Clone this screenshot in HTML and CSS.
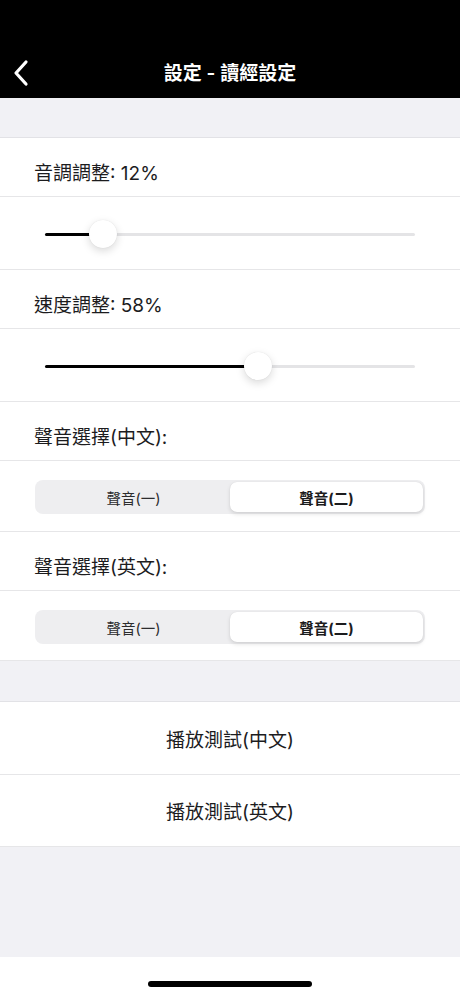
FILE: index.html
```html
<!DOCTYPE html>
<html lang="zh-Hant">
<head>
<meta charset="utf-8">
<title>設定 - 讀經設定</title>
<link rel="stylesheet" href="styles.css">
</head>
<body>
<div class="screen">
  <header class="navbar">
    <div class="nav-row">
      <svg class="back" width="20" height="28" viewBox="0 0 20 28" aria-hidden="true">
        <path d="M14 3 L4 14 L14 25" fill="none" stroke="#fff" stroke-width="3.2" stroke-linecap="round" stroke-linejoin="round"/>
      </svg>
      <div class="title">設定 - 讀經設定</div>
    </div>
  </header>

  <div class="spacer top-spacer"></div>

  <section class="group">
    <div class="row label-row">音調調整: 12%</div>
    <div class="row slider-row">
      <div class="slider">
        <div class="track"></div>
        <div class="fill" style="width: 58px"></div>
        <div class="thumb" style="left: 44px"></div>
      </div>
    </div>
    <div class="row label-row">速度調整: 58%</div>
    <div class="row slider-row">
      <div class="slider">
        <div class="track"></div>
        <div class="fill" style="width: 213px"></div>
        <div class="thumb" style="left: 199px"></div>
      </div>
    </div>
    <div class="row label-row">聲音選擇(中文):</div>
    <div class="row seg-row">
      <div class="segmented">
        <div class="segment">聲音(一)</div>
        <div class="segment selected">聲音(二)</div>
      </div>
    </div>
    <div class="row label-row">聲音選擇(英文):</div>
    <div class="row seg-row last">
      <div class="segmented">
        <div class="segment">聲音(一)</div>
        <div class="segment selected">聲音(二)</div>
      </div>
    </div>
  </section>

  <div class="spacer mid-spacer"></div>

  <section class="group">
    <div class="row button-row">播放測試(中文)</div>
    <div class="row button-row">播放測試(英文)</div>
  </section>

  <div class="spacer fill-spacer"></div>

  <div class="home-area">
    <div class="home-indicator"></div>
  </div>
</div>
</body>
</html>
```
FILE: styles.css
```css
* { box-sizing: border-box; }

html, body {
  margin: 0;
  padding: 0;
  background: #ffffff;
}

body {
  font-family: "Inter", "Noto Sans CJK TC", "Noto Sans", sans-serif;
  color: #1c1c1e;
}

.screen {
  width: 460px;
  height: 996px;
  display: flex;
  flex-direction: column;
  overflow: hidden;
}

.navbar {
  height: 98px;
  background: #000;
  display: flex;
  align-items: flex-end;
  flex-shrink: 0;
}

.nav-row {
  position: relative;
  width: 100%;
  height: 50px;
  display: flex;
  align-items: center;
  justify-content: center;
}

.back {
  position: absolute;
  left: 12px;
  top: 11px;
}

.title {
  color: #fff;
  font-size: 19px;
  font-weight: 600;
  line-height: 26px;
  padding-top: 2px;
}

.spacer {
  background: #f1f1f5;
  flex-shrink: 0;
}

.top-spacer {
  height: 40px;
  border-bottom: 1px solid #e2e2e6;
}

.mid-spacer {
  height: 41px;
  border-bottom: 1px solid #e2e2e6;
}

.fill-spacer {
  flex: 1;
}

.group {
  background: #fff;
  flex-shrink: 0;
}

.row {
  border-bottom: 1px solid #e6e6e8;
}

.label-row {
  height: 59px;
  padding: 23px 0 0 34px;
  font-size: 19px;
  line-height: 26px;
  color: #1c1c1e;
}

.slider-row {
  height: 73px;
  padding: 22px 45px 0 45px;
}

.slider {
  position: relative;
  height: 30px;
}

.track {
  position: absolute;
  left: 0;
  right: 0;
  top: 14px;
  height: 3px;
  border-radius: 2px;
  background: #e4e4e6;
}

.fill {
  position: absolute;
  left: 0;
  top: 14px;
  height: 3px;
  border-radius: 2px;
  background: #000;
}

.thumb {
  position: absolute;
  top: 1px;
  width: 28px;
  height: 28px;
  border-radius: 50%;
  background: #fff;
  box-shadow: 0 3px 8px rgba(0, 0, 0, 0.15), 0 0 1px rgba(0, 0, 0, 0.12);
}

.seg-row {
  height: 71px;
  padding: 19px 35px 0 35px;
}

.seg-row.last {
  height: 70px;
}

.segmented {
  display: flex;
  height: 34px;
  padding: 2px;
  border-radius: 8px;
  background: #eeeef0;
}

.segment {
  flex: 1;
  display: flex;
  align-items: center;
  justify-content: center;
  font-size: 14.5px;
  color: #2c2c2e;
  border-radius: 7px;
}

.segment.selected {
  background: #fff;
  font-weight: 700;
  color: #1c1c1e;
  box-shadow: 0 2px 4px rgba(0, 0, 0, 0.12), 0 0 1px rgba(0, 0, 0, 0.1);
}

.button-row {
  height: 73px;
  display: flex;
  align-items: center;
  justify-content: center;
  font-size: 19px;
  color: #1c1c1e;
}

.button-row:last-child {
  height: 72px;
}

.home-area {
  height: 39px;
  background: #fff;
  display: flex;
  justify-content: center;
  padding-top: 24px;
  flex-shrink: 0;
}

.home-indicator {
  width: 164px;
  height: 6px;
  border-radius: 3px;
  background: #000;
}
```
